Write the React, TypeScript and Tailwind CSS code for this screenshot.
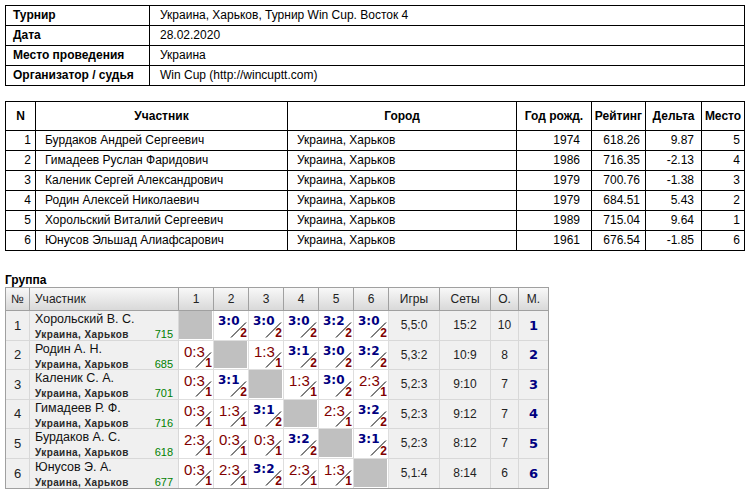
import { Fragment } from "react";

const info = [
  ["Турнир", "Украина, Харьков, Турнир Win Cup. Восток 4"],
  ["Дата", "28.02.2020"],
  ["Место проведения", "Украина"],
  ["Организатор / судья", "Win Cup (http://wincuptt.com)"],
];

const players = [
  { n: 1, name: "Бурдаков Андрей Сергеевич", year: 1974, rating: "618.26", delta: "9.87", place: 5 },
  { n: 2, name: "Гимадеев Руслан Фаридович", year: 1986, rating: "716.35", delta: "-2.13", place: 4 },
  { n: 3, name: "Каленик Сергей Александрович", year: 1979, rating: "700.76", delta: "-1.38", place: 3 },
  { n: 4, name: "Родин Алексей Николаевич", year: 1979, rating: "684.51", delta: "5.43", place: 2 },
  { n: 5, name: "Хорольский Виталий Сергеевич", year: 1989, rating: "715.04", delta: "9.64", place: 1 },
  { n: 6, name: "Юнусов Эльшад Алиафсарович", year: 1961, rating: "676.54", delta: "-1.85", place: 6 },
];

const group = [
  { name: "Хорольский В. С.", rating: 715, res: [null, "3:0/2", "3:0/2", "3:0/2", "3:2/2", "3:0/2"], games: "5,5:0", sets: "15:2", pts: 10 },
  { name: "Родин А. Н.", rating: 685, res: ["0:3/1", null, "1:3/1", "3:1/2", "3:0/2", "3:2/2"], games: "5,3:2", sets: "10:9", pts: 8 },
  { name: "Каленик С. А.", rating: 701, res: ["0:3/1", "3:1/2", null, "1:3/1", "3:0/2", "2:3/1"], games: "5,2:3", sets: "9:10", pts: 7 },
  { name: "Гимадеев Р. Ф.", rating: 716, res: ["0:3/1", "1:3/1", "3:1/2", null, "2:3/1", "3:2/2"], games: "5,2:3", sets: "9:12", pts: 7 },
  { name: "Бурдаков А. С.", rating: 618, res: ["2:3/1", "0:3/1", "0:3/1", "3:2/2", null, "3:1/2"], games: "5,2:3", sets: "8:12", pts: 7 },
  { name: "Юнусов Э. А.", rating: 677, res: ["0:3/1", "2:3/1", "3:2/2", "2:3/1", "1:3/1", null], games: "5,1:4", sets: "8:14", pts: 6 },
];

const headCell =
  "flex h-[23px] items-center justify-center border-r border-b border-[#a0a0a0] bg-linear-to-b from-[#f8f8f8] to-[#d9d9d9] text-[12px] text-[#222]";

const ScoreCell = ({ value, last }: { value: string | null; last: boolean }) => {
  const border = last
    ? "h-[29.5px] border-r border-[#dedede] bg-white"
    : "h-[29.5px] border-r border-b border-[#dedede] bg-white";
  if (!value) {
    return (
      <div className={border + " pr-px pb-px"}>
        <div className="h-full bg-[#c0c0c0]" />
      </div>
    );
  }
  const [score, pts] = value.split("/");
  const win = pts === "2";
  return (
    <div className={border + " relative"}>
      <span
        className={
          win
            ? "absolute left-[4px] top-[3px] font-['DejaVu_Sans',sans-serif] text-[12px] leading-[14px] font-bold text-[#000080]"
            : "absolute left-[5px] top-[2px] text-[15px] leading-[17px] text-[#800000]"
        }>
        {score}
      </span>
      <svg className="absolute left-0 top-0" width="34" height="28">
        <line x1="17" y1="26.5" x2="32" y2="11.5" stroke="#000" strokeWidth="1" />
      </svg>
      <span className="absolute right-[1px] top-[16px] text-[12px] leading-[12px] font-bold text-[#800000]">
        {pts}
      </span>
    </div>
  );
};

export default function App() {
  return (
    <div className="min-h-[494px] bg-white pt-[5px] font-['Liberation_Sans',Arial,sans-serif] text-[12px] text-black">
      {/* Tournament info */}
      <div className="ml-[5px] w-[740px] border border-black">
        {info.map(([label, value], i) => (
          <div
            key={label}
            className={
              i < info.length - 1
                ? "grid h-[20px] grid-cols-[144px_1fr] border-b border-black"
                : "grid h-[19px] grid-cols-[144px_1fr]"
            }>
            <div className="border-r border-black pl-[7px] leading-[19px] font-bold">{label}</div>
            <div className="pl-[10px] leading-[19px]">{value}</div>
          </div>
        ))}
      </div>

      {/* Participants */}
      <div className="mt-[15px] ml-[5px] w-[740px] border border-black">
        <div className="grid h-[29px] grid-cols-[30px_252px_229px_75px_54px_56px_42px] border-b border-black font-bold">
          <div className="flex items-center justify-center border-r border-black">N</div>
          <div className="flex items-center justify-center border-r border-black">Участник</div>
          <div className="flex items-center justify-center border-r border-black">Город</div>
          <div className="flex items-center justify-center border-r border-black">Год рожд.</div>
          <div className="flex items-center justify-center border-r border-black">Рейтинг</div>
          <div className="flex items-center justify-center border-r border-black">Дельта</div>
          <div className="flex items-center justify-center">Место</div>
        </div>
        {players.map((p, i) => (
          <div
            key={p.n}
            className={
              i < players.length - 1
                ? "grid h-[20px] grid-cols-[30px_252px_229px_75px_54px_56px_42px] border-b border-black leading-[19px]"
                : "grid h-[19px] grid-cols-[30px_252px_229px_75px_54px_56px_42px] leading-[19px]"
            }>
            <div className="border-r border-black pr-[4px] text-right">{p.n}</div>
            <div className="border-r border-black pl-[9px]">{p.name}</div>
            <div className="border-r border-black pl-[9px]">Украина, Харьков</div>
            <div className="border-r border-black pr-[11px] text-right">{p.year}</div>
            <div className="border-r border-black pr-[5px] text-right">{p.rating}</div>
            <div className="border-r border-black pr-[7px] text-right">{p.delta}</div>
            <div className="pr-[4px] text-right">{p.place}</div>
          </div>
        ))}
      </div>

      {/* Group */}
      <div className="mt-[22px] ml-[5px] leading-[14px] font-bold">Группа</div>
      <div className="ml-[5px] grid w-[544px] grid-cols-[24px_149px_repeat(6,35px)_51px_51px_28px_29px] border border-[#a0a0a0]">
        <div className={headCell}>№</div>
        <div className="flex h-[23px] items-center border-r border-b border-[#a0a0a0] bg-linear-to-b from-[#f8f8f8] to-[#d9d9d9] pl-[5px] text-[12px] text-[#222]">
          Участник
        </div>
        {[1, 2, 3, 4, 5, 6].map((n) => (
          <div key={n} className={headCell}>
            {n}
          </div>
        ))}
        <div className={headCell}>Игры</div>
        <div className={headCell}>Сеты</div>
        <div className={headCell}>О.</div>
        <div className="flex h-[23px] items-center justify-center border-b border-[#a0a0a0] bg-linear-to-b from-[#f8f8f8] to-[#d9d9d9] text-[12px] text-[#222]">
          М.
        </div>

        {group.map((g, i) => {
          const last = i === group.length - 1;
          const cell = last
            ? "flex h-[29.5px] items-center justify-center border-r border-[#d8d8d8] bg-[#f0f0f0] text-[12px] text-[#222]"
            : "flex h-[29.5px] items-center justify-center border-r border-b border-[#d8d8d8] bg-[#f0f0f0] text-[12px] text-[#222]";
          return (
            <Fragment key={g.name}>
              <div className={cell + " text-[13px]"}>{i + 1}</div>
              <div
                className={
                  last
                    ? "h-[29.5px] border-r border-[#d8d8d8] bg-[#f0f0f0] px-[5px] pt-px"
                    : "h-[29.5px] border-r border-b border-[#d8d8d8] bg-[#f0f0f0] px-[5px] pt-px"
                }>
                <div className="text-[12.5px] leading-[15px] text-[#111]">{g.name}</div>
                <div className="mt-[2px] flex items-baseline justify-between leading-[11px]">
                  <span className="text-[10px] font-bold tracking-[0.4px] text-[#2a2a2a]">Украина, Харьков</span>
                  <span className="text-[11px] text-[#008000]">{g.rating}</span>
                </div>
              </div>
              {g.res.map((r, j) => (
                <ScoreCell key={j} value={r} last={last} />
              ))}
              <div className={cell}>{g.games}</div>
              <div className={cell}>{g.sets}</div>
              <div className={cell}>{g.pts}</div>
              <div
                className={
                  last
                    ? "flex h-[29.5px] items-center justify-center bg-[#f0f0f0] font-['DejaVu_Sans',sans-serif] text-[13px] font-bold text-[#000080]"
                    : "flex h-[29.5px] items-center justify-center border-b border-[#d8d8d8] bg-[#f0f0f0] font-['DejaVu_Sans',sans-serif] text-[13px] font-bold text-[#000080]"
                }>
                {i + 1}
              </div>
            </Fragment>
          );
        })}
      </div>
    </div>
  );
}
